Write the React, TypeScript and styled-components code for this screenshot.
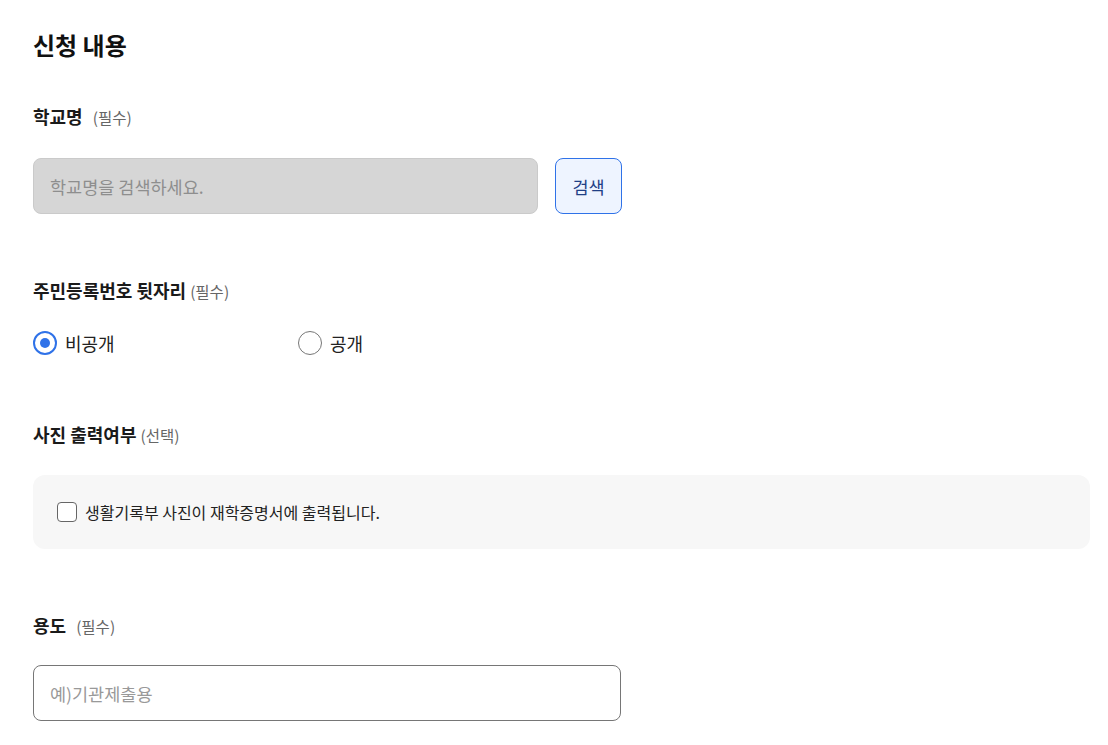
import React, { useState } from 'react'
import styled, { createGlobalStyle } from 'styled-components'

const GlobalStyle = createGlobalStyle`
  html, body {
    margin: 0;
    padding: 0;
    background: #fff;
  }
  body {
    font-family: "Noto Sans CJK KR", "Noto Sans", sans-serif;
    color: #222;
  }
  * {
    box-sizing: border-box;
  }
`

const Page = styled.div`
  padding: 29px 18px 24px 33px;
`

const Title = styled.h2`
  margin: 0;
  font-size: 24px;
  line-height: 32px;
  font-weight: 700;
  color: #111;
`

const Section = styled.section<{ $top: number }>`
  margin-top: ${({ $top }) => $top}px;
`

const Label = styled.div<{ $gap?: number }>`
  display: flex;
  align-items: baseline;
  gap: ${({ $gap }) => $gap ?? 4}px;
  font-size: 18px;
  line-height: 24px;
  font-weight: 700;
  color: #1a1a1a;
`

const Note = styled.span`
  font-size: 15.5px;
  font-weight: 400;
  color: #666;
`

const Body = styled.div<{ $top: number }>`
  margin-top: ${({ $top }) => $top}px;
`

const SearchRow = styled.div`
  display: flex;
  gap: 17px;
`

const TextInput = styled.input<{ $width: number; $disabled?: boolean }>`
  width: ${({ $width }) => $width}px;
  height: 56px;
  padding: 0 16px;
  border-radius: 8px;
  border: 1px solid ${({ $disabled }) => ($disabled ? '#cacaca' : '#767676')};
  background: ${({ $disabled }) => ($disabled ? '#d6d6d6' : '#fff')};
  font-family: inherit;
  font-size: 17.5px;
  color: #222;
  outline: none;

  &::placeholder {
    color: ${({ $disabled }) => ($disabled ? '#8e8e8e' : '#999')};
  }
`

const SearchButton = styled.button`
  width: 67px;
  height: 56px;
  padding: 0;
  border: 1px solid #2f72e8;
  border-radius: 8px;
  background: #eef4ff;
  color: #1f3f86;
  font-family: inherit;
  font-size: 17.5px;
  cursor: pointer;
`

const RadioGroup = styled.div`
  display: flex;
`

const RadioOption = styled.label`
  width: 265px;
  display: flex;
  align-items: center;
  gap: 8px;
  font-size: 18px;
  line-height: 24px;
  color: #222;
  cursor: pointer;
`

const RadioMark = styled.span<{ $checked: boolean }>`
  width: 24px;
  height: 24px;
  border-radius: 50%;
  border: ${({ $checked }) => ($checked ? '2px solid #2f72e8' : '1.5px solid #777')};
  display: flex;
  align-items: center;
  justify-content: center;
  background: #fff;

  &::after {
    content: '';
    width: 10px;
    height: 10px;
    border-radius: 50%;
    background: ${({ $checked }) => ($checked ? '#2f72e8' : 'transparent')};
  }
`

const InfoBox = styled.div`
  height: 74px;
  padding: 0 24px;
  border-radius: 12px;
  background: #f7f7f7;
  display: flex;
  align-items: center;
`

const CheckOption = styled.label`
  display: flex;
  align-items: center;
  gap: 8px;
  font-size: 16px;
  color: #222;
  cursor: pointer;
`

const CheckMark = styled.span<{ $checked: boolean }>`
  width: 20px;
  height: 20px;
  border-radius: 4px;
  border: 1.5px solid #666;
  background: ${({ $checked }) => ($checked ? '#2f72e8' : '#fff')};
`

export default function App() {
  const [pub, setPub] = useState(false)
  const [photo, setPhoto] = useState(false)

  return (
    <Page>
      <GlobalStyle />
      <Title>신청 내용</Title>

      <Section $top={43}>
        <Label $gap={10}>
          학교명 <Note>(필수)</Note>
        </Label>
        <Body $top={29}>
          <SearchRow>
            <TextInput $width={505} $disabled disabled placeholder="학교명을 검색하세요." />
            <SearchButton>검색</SearchButton>
          </SearchRow>
        </Body>
      </Section>

      <Section $top={64}>
        <Label>
          주민등록번호 뒷자리 <Note>(필수)</Note>
        </Label>
        <Body $top={28}>
          <RadioGroup>
            <RadioOption onClick={() => setPub(false)}>
              <RadioMark $checked={!pub} />
              비공개
            </RadioOption>
            <RadioOption onClick={() => setPub(true)}>
              <RadioMark $checked={pub} />
              공개
            </RadioOption>
          </RadioGroup>
        </Body>
      </Section>

      <Section $top={67}>
        <Label>
          사진 출력여부 <Note>(선택)</Note>
        </Label>
        <Body $top={28}>
          <InfoBox>
            <CheckOption onClick={() => setPhoto(!photo)}>
              <CheckMark $checked={photo} />
              생활기록부 사진이 재학증명서에 출력됩니다.
            </CheckOption>
          </InfoBox>
        </Body>
      </Section>

      <Section $top={64}>
        <Label $gap={10}>
          용도 <Note>(필수)</Note>
        </Label>
        <Body $top={27}>
          <TextInput $width={588} placeholder="예)기관제출용" />
        </Body>
      </Section>
    </Page>
  )
}
